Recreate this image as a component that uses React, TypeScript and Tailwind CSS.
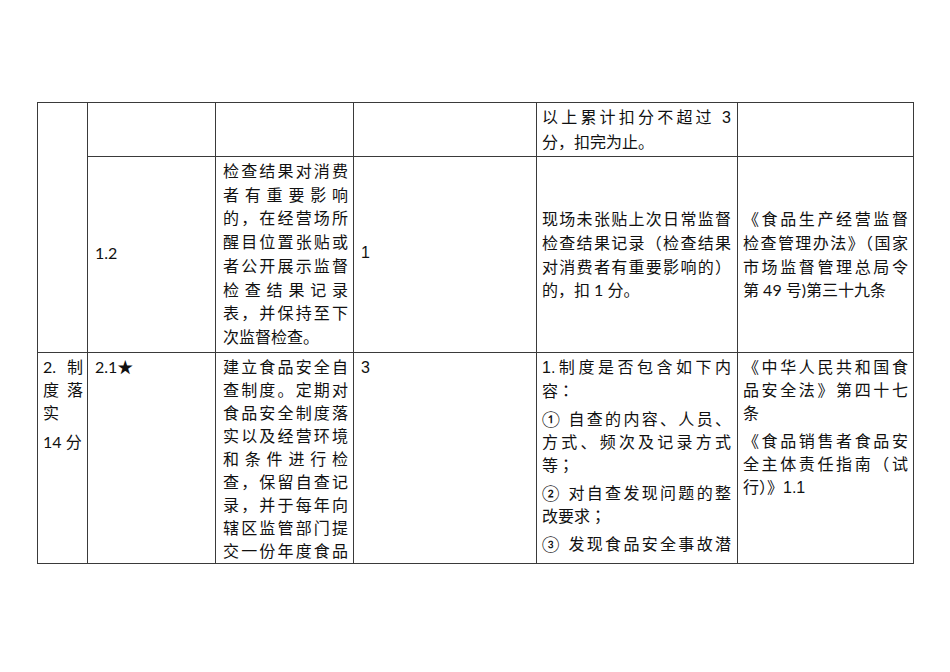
import type { ReactNode } from "react";

// one rendered line of a cell; "j" stretches it edge to edge like the Word doc
function L({ children, j, className = "" }: { children: ReactNode; j?: boolean; className?: string }) {
  return (
    <div className={(j ? "text-justify [text-align-last:justify] " : "") + className}>
      {children}
    </div>
  );
}

const arial = "[font-family:'Liberation_Sans',sans-serif]";
// centred full-width colon / semicolon as in the source doc
const jp = "[font-family:'Noto_Sans_CJK_JP',sans-serif]";
const cell = "border-r border-b border-[#3a3a3a] overflow-hidden";

export default function App() {
  return (
    <div className="w-[950px] h-[672px] bg-white text-[#111] text-[16px] [font-family:Lato,'Noto_Sans_CJK_SC',sans-serif]">
      <div className="pt-[102px] pl-[37px]">
        <div className="grid grid-cols-[50px_128px_138px_183px_201px_176px] grid-rows-[54px_196px_211px] w-[877px] border-t border-l border-[#3a3a3a]">
          {/* row 1 + 2: first column merged */}
          <div className={cell + " row-span-2"} />

          {/* row 1 */}
          <div className={cell} />
          <div className={cell} />
          <div className={cell} />
          <div className={cell + " pl-[5px] pr-[6px] pt-[2px] leading-[24px]"}>
            <L j>
              以上累计扣分不超过 <span className={arial}>3</span>
            </L>
            <L>分，扣完为止。</L>
          </div>
          <div className={cell} />

          {/* row 2 */}
          <div className={cell + " flex items-center pl-[7px] pb-[4px]"}>1.2</div>
          <div className={cell + " pl-[7px] pr-[5px] pt-[2px] leading-[23.7px]"}>
            <L j>检查结果对消费</L>
            <L j>者有重要影响</L>
            <L j>的，在经营场所</L>
            <L j>醒目位置张贴或</L>
            <L j>者公开展示监督</L>
            <L j>检查结果记录</L>
            <L j>表，并保持至下</L>
            <L>次监督检查。</L>
          </div>
          <div className={cell + " flex items-center pl-[7px] pb-[4px]"}>
            <span className={arial}>1</span>
          </div>
          <div className={cell + " flex flex-col justify-center pl-[5px] pr-[6px] leading-[23.7px]"}>
            <L j>现场未张贴上次日常监督</L>
            <L j>检查结果记录（检查结果</L>
            <L j>对消费者有重要影响的）</L>
            <L>的，扣 1 分。</L>
          </div>
          <div className={cell + " flex flex-col justify-center pl-[5px] pr-[5px] leading-[23.7px]"}>
            <L j>《食品生产经营监督</L>
            <L j>检查管理办法》（国家</L>
            <L j>市场监督管理总局令</L>
            <L>第 49 号)第三十九条</L>
          </div>

          {/* row 3 */}
          <div className={cell + " pl-[5px] pr-[4px] pt-[2px] leading-[23px]"}>
            <L j>2. 制</L>
            <L j>度 落</L>
            <L>实</L>
            <L className="mt-[6px]">14 分</L>
          </div>
          <div className={cell + " pl-[7px] pt-[2px] leading-[23px]"}>2.1★</div>
          <div className={cell + " pl-[7px] pr-[5px] pt-[2px] leading-[23px]"}>
            <L j>建立食品安全自</L>
            <L j>查制度。定期对</L>
            <L j>食品安全制度落</L>
            <L j>实以及经营环境</L>
            <L j>和条件进行检</L>
            <L j>查，保留自查记</L>
            <L j>录，并于每年向</L>
            <L j>辖区监管部门提</L>
            <L j>交一份年度食品</L>
          </div>
          <div className={cell + " pl-[7px] pt-[2px] leading-[23px]"}>
            <span className={arial}>3</span>
          </div>
          <div className={cell + " pl-[5px] pr-[6px] pt-[2px] leading-[23px]"}>
            <L j>
              <span className={arial}>1.</span>制度是否包含如下内
            </L>
            <L>
              容<span className={jp}>：</span>
            </L>
            <L j className="mt-[5px]">① 自查的内容、人员、</L>
            <L j>方式、频次及记录方式</L>
            <L>
              等<span className={jp}>；</span>
            </L>
            <L j className="mt-[5px]">② 对自查发现问题的整</L>
            <L>
              改要求<span className={jp}>；</span>
            </L>
            <L j className="mt-[5px]">③ 发现食品安全事故潜</L>
          </div>
          <div className={cell + " pl-[5px] pr-[5px] pt-[2px] leading-[23px]"}>
            <L j>《中华人民共和国食</L>
            <L j>品安全法》第四十七</L>
            <L>条</L>
            <L j className="mt-[5px]">《食品销售者食品安</L>
            <L j>全主体责任指南（试</L>
            <L>
              行）》<span className={arial}>1.1</span>
            </L>
          </div>
        </div>
      </div>
    </div>
  );
}
